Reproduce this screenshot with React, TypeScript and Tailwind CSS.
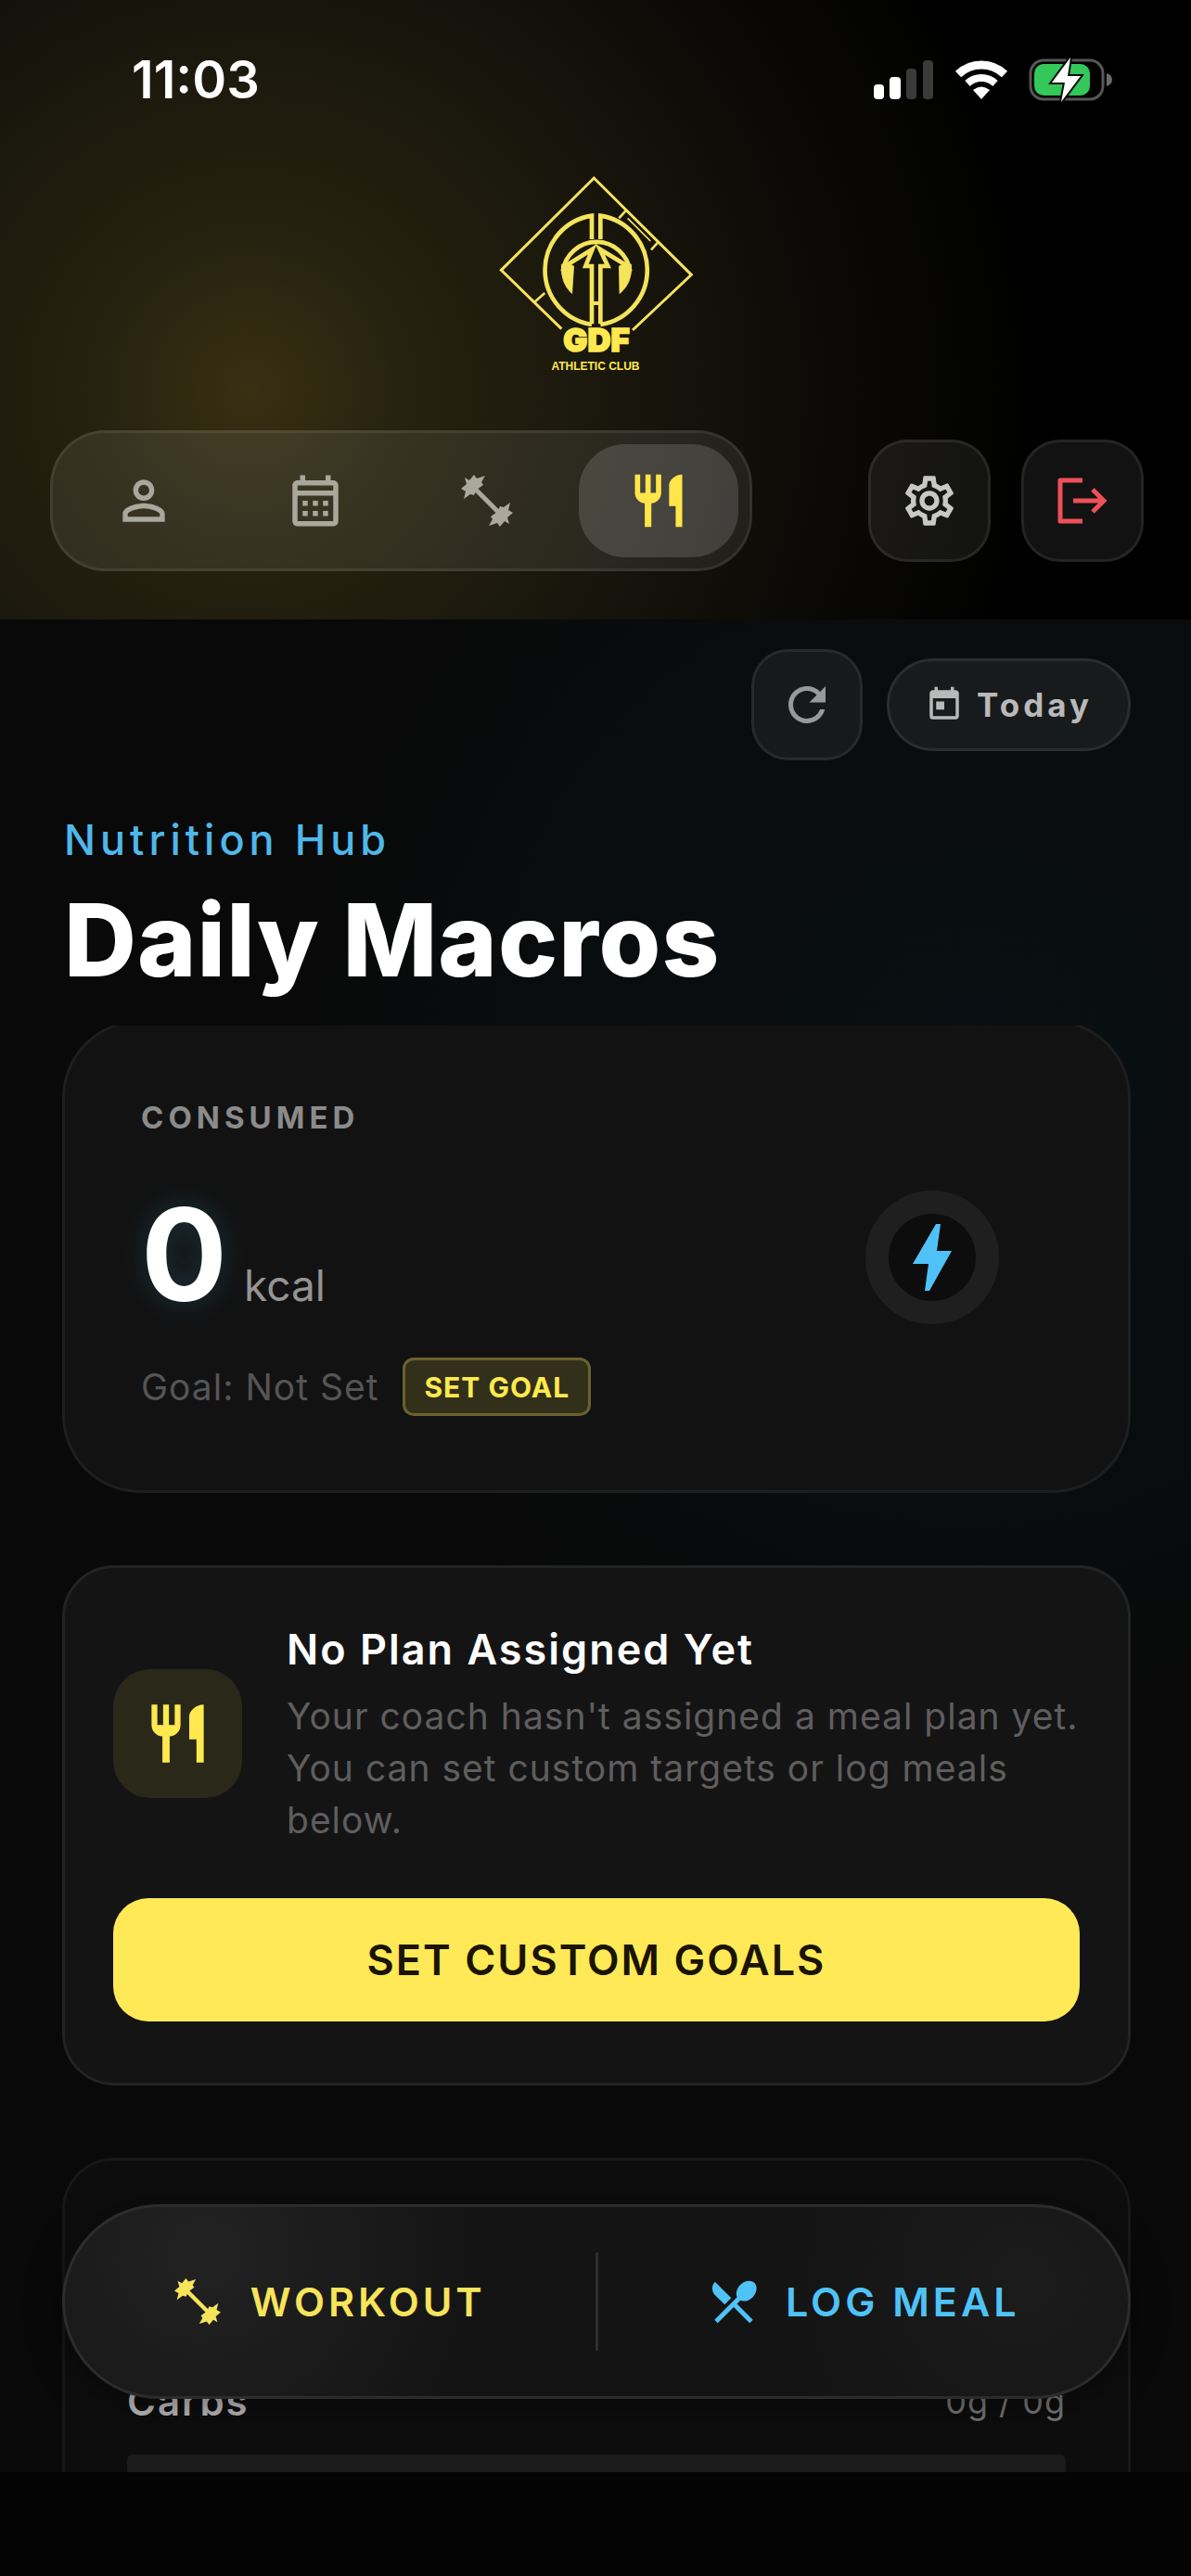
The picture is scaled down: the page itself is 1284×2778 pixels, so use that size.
import React from "react";
import { MdOutlineCalendarMonth, MdOutlineSettings, MdPersonOutline, MdRefresh, MdRestaurant, MdRestaurantMenu, MdToday } from "react-icons/md";

interface IconProps {
    className?: string;
}

const Dumbbell = ({ className }: IconProps) => (
    <svg viewBox="0 0 56 56" fill="none" stroke="currentColor" className={className} aria-hidden="true">
        <path d="M12 12L44 44" strokeWidth="5" />
        <path d="M4 3L9 6L14 0L17 4L26 1L22 8L24 11L17 16L14 22L10 21L3 26L5 18L0 15L6 10z" fill="currentColor" stroke="none" />
        <path d="M52 53L47 50L42 56L39 52L30 55L34 48L32 45L39 40L42 34L46 35L53 30L51 38L56 41L50 46z" fill="currentColor" stroke="none" />
    </svg>
);

const Logout = ({ className }: IconProps) => (
    <svg viewBox="0 0 54 50" fill="none" stroke="currentColor" strokeWidth="5" className={className} aria-hidden="true">
        <path d="M27 3H3v44h24" strokeLinejoin="round" />
        <path d="M17 25h33M38 13l12 12-12 12" />
    </svg>
);

const Bolt = ({ className }: IconProps) => (
    <svg viewBox="0 0 42 72" fill="currentColor" className={className} aria-hidden="true">
        <path d="M25 0h5l-4 29h16L18 72h-5l4-29H0z" />
    </svg>
);

const Logo = () => (
    <svg viewBox="0 0 840 750" className="h-[250px] w-[280px]" fill="none" stroke="#f5e35b" role="img" aria-label="GDF Athletic Club">
        <g strokeWidth="9">
            <path d="M310 548L115 358L415 60L730 373L540 552" />
            <path d="M520 163L496 190M622 268L600 292M222 462L256 432" strokeWidth="8" />
            <path d="M524 190L598 264" strokeWidth="5" />
        </g>
        <g strokeWidth="14">
            <path d="M408 534A178 178 0 0 1 408 182V258" />
            <path d="M436 534A178 178 0 0 0 436 182V258" />
            <path d="M314 362A110 110 0 0 1 532 362" />
            <path d="M408 532V345H388L410 290L322 345M436 532V345H460L434 290L524 345" />
            <path d="M408 465h28" strokeWidth="12" />
        </g>
        <path d="M310 340Q306 400 344 434L350 345L330 335zM536 340Q540 400 498 434L496 345L516 335z" fill="#f5e35b" strokeWidth="2" />
        <g fill="#ffe94f" stroke="none" textAnchor="middle" fontFamily="Inter, sans-serif">
            <text x="423" y="622" fontSize="104" fontWeight="900" stroke="#ffe94f" strokeWidth="5">GDF</text>
            <text x="420" y="681" fontSize="36" fontWeight="700" fontFamily="'Liberation Sans Narrow', 'Liberation Sans', sans-serif">ATHLETIC CLUB</text>
        </g>
    </svg>
);

const StatusBar = () => (
    <div className="flex h-[172px] items-center justify-between pr-[84px] pl-[142px]">
        <span className="text-[56px] leading-none font-semibold">11:03</span>
        <div className="flex items-center gap-[22px]">
            <svg viewBox="0 0 66 42" className="h-[42px] w-[66px]" fill="#fff" aria-hidden="true">
                <rect x="1" y="26" width="11" height="16" rx="4" />
                <rect x="18" y="18" width="12" height="24" rx="4" />
                <rect x="36" y="9" width="11" height="33" rx="4" fill="#3a3a3a" />
                <rect x="54" y="0" width="11" height="42" rx="4" fill="#3a3a3a" />
            </svg>
            <svg viewBox="0 0 58 42" className="h-[42px] w-[58px]" fill="none" stroke="#fff" strokeWidth="9" aria-hidden="true">
                <path d="M4 15A36 36 0 0 1 54 15" />
                <path d="M14 25A22 22 0 0 1 44 25" strokeWidth="8" />
                <path d="M20 32Q29 25 38 32L29 42z" fill="#fff" stroke="none" />
            </svg>
            <svg viewBox="0 0 91 48" className="h-12 w-[91px]" fill="none" aria-hidden="true">
                <rect x="2" y="3" width="78" height="42" rx="14" stroke="#565656" strokeWidth="3" />
                <rect x="6" y="7" width="60" height="34" rx="10" fill="#34c759" />
                <path d="M84 17q6 2 6 7t-6 7z" fill="#6a6a6a" />
                <path d="M45 0L25 27h14l-4 21L56 20H42z" fill="#fff" stroke="#0a0a0a" strokeWidth="4" paintOrder="stroke" />
            </svg>
        </div>
    </div>
);

const tabs = [
    { label: "Profile", icon: <MdPersonOutline className="size-[68px]" /> },
    { label: "Calendar", icon: <MdOutlineCalendarMonth className="size-[66px]" /> },
    { label: "Workouts", icon: <Dumbbell className="size-14" /> },
    { label: "Nutrition", icon: <MdRestaurant className="size-[68px]" />, active: true },
];

const Header = () => (
    <header className="bg-black bg-[radial-gradient(circle_at_270px_420px,#383013_0,#26210f_180px,#1a180d_380px,#0c0b07_600px,#000_860px)] pb-[52px]">
        <StatusBar />
        <div className="flex justify-center">
            <Logo />
        </div>
        <div className="mt-[42px] flex items-center justify-between pr-[51px] pl-[54px]">
            <nav className="flex gap-[13px] rounded-[60px] border-3 border-white/8 bg-white/8 p-3">
                {tabs.map((tab) => (
                    <button
                        key={tab.label}
                        aria-label={tab.label}
                        className={
                            tab.active
                                ? "flex h-[122px] w-[172px] items-center justify-center rounded-[50px] bg-white/14 text-[#ffe54a]"
                                : "flex h-[122px] w-[172px] items-center justify-center text-[#aaa79c]"
                        }
                    >
                        {tab.icon}
                    </button>
                ))}
            </nav>
            <div className="flex gap-[33px]">
                <button aria-label="Settings" className="flex size-[132px] items-center justify-center rounded-[42px] border-3 border-white/8 bg-white/7 text-[#c8c8c8]">
                    <MdOutlineSettings className="size-16" />
                </button>
                <button aria-label="Log out" className="flex size-[132px] items-center justify-center rounded-[42px] border-3 border-white/8 bg-white/7 text-[#ee5058]">
                    <Logout className="h-[50px] w-[54px]" />
                </button>
            </div>
        </div>
    </header>
);

const ConsumedCard = () => (
    <section className="-mt-[6px] flex items-center justify-between rounded-[84px] border-3 border-[#1e1e1e] bg-[#121212] pt-[82px] pr-[139px] pb-[80px] pl-[82px]">
        <div>
            <h2 className="text-[33px] leading-[40px] font-bold tracking-[5px] text-[#8b8b8b]">CONSUMED</h2>
            <p className="mt-[58px] flex h-[140px] items-baseline gap-[18px]">
                <span className="text-[138px] leading-[140px] font-bold text-white [text-shadow:0_0_30px_#4fc3f733]">0</span>
                <span className="text-[46px] leading-none text-[#949494]">kcal</span>
            </p>
            <div className="mt-[41px] flex items-center gap-[26px]">
                <span className="text-[39px] leading-[48px] tracking-[1px] text-[#555]">Goal: Not Set</span>
                <button className="h-[63px] rounded-xl border-3 border-[#6b6130] bg-[#32301a] px-5 text-[30px] leading-none font-bold tracking-[1px] text-[#ffe94f]">SET GOAL</button>
            </div>
        </div>
        <div className="flex size-36 items-center justify-center rounded-full border-[25px] border-[#1f1f1f] bg-[#0d0d0d] text-[#4fc3f7]">
            <Bolt className="h-[72px] w-[42px] shrink-0" />
        </div>
    </section>
);

const PlanCard = () => (
    <section className="rounded-[56px] border-3 border-[#222323] bg-[#141414] px-[52px] pt-14 pb-[66px]">
        <div className="flex items-center gap-12">
            <div className="flex size-[139px] shrink-0 items-center justify-center rounded-[40px] bg-[#2a2819] text-[#ffe94f]">
                <MdRestaurant className="size-[75px]" />
            </div>
            <div>
                <h2 className="text-[45px] leading-[64px] font-semibold tracking-[2px] text-white">No Plan Assigned Yet</h2>
                <p className="mt-3 text-[39px] leading-[56px] tracking-[1px] text-[#5e5e5e]">
                    Your coach hasn't assigned a meal plan yet. You can set custom targets or log meals below.
                </p>
            </div>
        </div>
        <button className="mt-14 h-[133px] w-full rounded-[38px] bg-[#ffe957] text-[45px] font-semibold tracking-[2px] text-[#1a1400]">SET CUSTOM GOALS</button>
    </section>
);

const MacrosCard = () => (
    <section className="h-[600px] rounded-[56px] border-3 border-[#181818] bg-[#0d0d0d] px-[67px] pt-[232px]">
        <div className="flex items-center justify-between leading-[56px]">
            <h3 className="text-[42px] font-semibold tracking-[2px] text-[#b8b8b8]">Carbs</h3>
            <span className="text-[36px] tracking-[1px] text-[#757575]">0g / 0g</span>
        </div>
        <div className="mt-[29px] h-6 rounded-md bg-[#1b1b1b]" />
    </section>
);

const ActionBar = () => (
    <div className="absolute right-[65px] bottom-[79px] left-[67px] flex h-[210px] items-center rounded-full border-3 border-[#2c2c2c] bg-[#141414] bg-[radial-gradient(circle_at_150px_50px,#222_0,#14141400_300px),radial-gradient(circle_at_90%_40%,#1b1b1b_0,#14141400_260px)] text-[43px] font-semibold tracking-[4px] shadow-[0_6px_40px_#00000066]">
        <button className="flex flex-1 items-center justify-center gap-[32px] text-[#f7e45b]">
            <Dumbbell className="size-[50px]" />
            WORKOUT
        </button>
        <div className="h-[106px] w-[3px] bg-[#2e2e2e]" />
        <button className="flex flex-1 items-center justify-center gap-[26px] text-[#4fc3f7]">
            <MdRestaurantMenu className="size-[60px]" />
            LOG MEAL
        </button>
    </div>
);

const App = () => {
    return (
        <div className="flex h-screen flex-col bg-[#040404] font-['Inter',sans-serif] text-white">
            <Header />
            <main className="relative flex min-h-0 flex-1 flex-col overflow-hidden bg-[#090909] bg-[radial-gradient(circle_at_1050px_460px,#0a1013_0,#090909_760px)] pt-8 pr-[65px] pl-[67px]">
                <div className="flex items-center justify-end gap-[26px]">
                    <button aria-label="Refresh" className="flex size-[120px] items-center justify-center rounded-[40px] border-3 border-[#272a2b] bg-[#18191b] text-[#999]">
                        <MdRefresh className="size-[60px]" />
                    </button>
                    <button className="flex h-[100px] items-center gap-[14px] rounded-full border-3 border-[#2a2d2e] bg-[#181b1c] px-[38px] text-[35px] font-bold tracking-[4px] text-[#b9b9b9]">
                        <MdToday className="size-[42px]" />
                        Today
                    </button>
                </div>
                <div className="pl-0.5">
                    <p className="mt-[59px] text-[45px] leading-[54px] font-medium tracking-[5px] text-[#4fb8ea]">Nutrition Hub</p>
                    <h1 className="mt-[21px] text-[108px] leading-[120px] font-extrabold tracking-[1px]">Daily Macros</h1>
                </div>
                <div className="mt-8 flex min-h-0 flex-1 flex-col gap-[78px] overflow-hidden *:shrink-0">
                    <ConsumedCard />
                    <PlanCard />
                    <MacrosCard />
                </div>
                <ActionBar />
            </main>
            <div className="h-28" />
        </div>
    );
};

export default App;
